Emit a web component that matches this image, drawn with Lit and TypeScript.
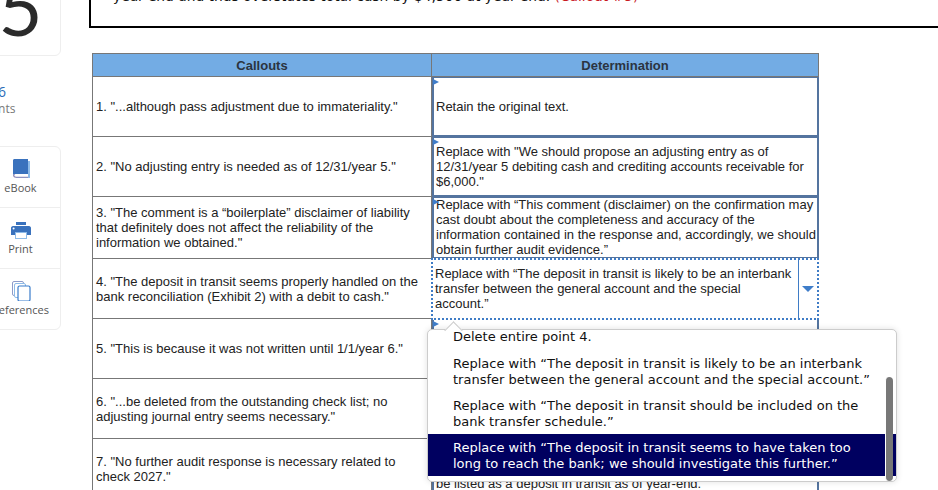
import { LitElement, html, css } from "lit";
import { customElement } from "lit/decorators.js";

const LEFT = [
  `1. "...although pass adjustment due to immateriality."`,
  `2. "No adjusting entry is needed as of 12/31/year 5."`,
  `3. "The comment is a “boilerplate” disclaimer of liability that definitely does not affect the reliability of the information we obtained."`,
  `4. "The deposit in transit seems properly handled on the bank reconciliation (Exhibit 2) with a debit to cash."`,
  `5. "This is because it was not written until 1/1/year 6."`,
  `6. "...be deleted from the outstanding check list; no adjusting journal entry seems necessary."`,
  `7. "No further audit response is necessary related to check 2027."`,
];

const RIGHT = [
  `Retain the original text.`,
  `Replace with "We should propose an adjusting entry as of 12/31/year 5 debiting cash and crediting accounts receivable for $6,000."`,
  `Replace with “This comment (disclaimer) on the confirmation may cast doubt about the completeness and accuracy of the information contained in the response and, accordingly, we should obtain further audit evidence.”`,
  `Replace with “The deposit in transit is likely to be an interbank transfer between the general account and the special account.”`,
  ``,
  ``,
  `be listed as a deposit in transit as of year-end.`,
];

const OPTIONS = [
  `Delete entire point 4.`,
  `Replace with “The deposit in transit is likely to be an interbank transfer between the general account and the special account.”`,
  `Replace with “The deposit in transit should be included on the bank transfer schedule.”`,
  `Replace with “The deposit in transit seems to have taken too long to reach the bank; we should investigate this further.”`,
];

@customElement("app-root")
export class AppRoot extends LitElement {
  static styles = css`
    :host { display: block; width: 938px; height: 490px; overflow: hidden; background: #fff; font-family: "Liberation Sans", Arial, sans-serif; }
    .page { display: flex; height: 490px; overflow: hidden; }

    .side { flex: none; width: 81px; margin-left: -20px; margin-right: 28px; display: flex; flex-direction: column; font-family: "Open Sans", sans-serif; }
    .score { flex: none; height: 100px; margin-top: -44px; box-sizing: border-box; border: 1px solid #eee; border-radius: 6px; display: flex; justify-content: center; align-items: flex-end; }
    .score span { font-family: Lato, sans-serif; font-size: 76px; line-height: 76px; color: #2b2b2b; margin-bottom: 10px; }
    .pts { margin-top: 27px; margin-right: 45px; text-align: center; white-space: nowrap; display: flex; flex-direction: column; align-items: center; }
    .pts b { display: block; font-weight: 400; font-size: 14px; line-height: 18px; color: #2a6cb8; }
    .pts i { display: block; font-style: normal; font-size: 12px; line-height: 16px; color: #777; }
    .tools { margin-top: 29px; border: 1px solid #eee; border-radius: 6px; }
    .tool { height: 60px; display: flex; flex-direction: column; align-items: center; padding-top: 11px; box-sizing: border-box; font-size: 11px; line-height: 14px; color: #555; gap: 2px; }
    .tool + .tool { border-top: 1px solid #eee; height: 61px; }
    .tool svg { display: block; flex: none; }

    .main { flex: 1; min-width: 0; }
    .box { height: 58px; margin-top: -30px; margin-right: -20px; box-sizing: border-box; border: 2px solid #000; padding: 16px 0 0 22px; font-family: "DejaVu Sans", sans-serif; font-size: 13.8px; line-height: 16px; color: #111; white-space: nowrap; }
    .box em { font-style: normal; color: #c8191f; }

    .table { margin: 25px 0 0 3px; width: 727px; display: grid; grid-template-columns: 340px 387px; grid-template-rows: 24px 60px 60px 62px 60px 60px 60px 60px; box-sizing: border-box; font-size: 13px; line-height: 15px; color: #222; }
    .th { background: #73ace4; border: 1px solid #777; font-weight: 700; color: #2b3440; text-align: center; display: flex; align-items: center; justify-content: center; box-sizing: border-box; padding-top: 1px; }
    .th.r { border-left: 0; }
    .l { border: 1px solid #777; border-top: 0; box-sizing: border-box; display: flex; align-items: center; padding: 0.5px 8px 0 3px; }
    .r-cell { position: relative; border: 2px solid #54749f; border-top-width: 1px; box-sizing: border-box; display: flex; align-items: center; padding: 0 0 0 2px; background: #fff; }
    .r-cell.tall { padding-bottom: 1px; }
    .r-cell::before { content: ""; position: absolute; left: -1px; top: 1px; border-left: 6px solid #3f7dc9; border-top: 3.5px solid transparent; border-bottom: 3.5px solid transparent; }
    .r-cell.focus { border: 2px dotted #3f7cc6; margin: -1px 0 -1px -1px; padding: 0; align-items: stretch; z-index: 1; }
    .r-cell.focus::before { display: none; }
    .ftext { flex: 1; display: flex; align-items: center; padding: 0 3px 1px 2px; border-right: 1px solid #3f7cc6; }
    .arrow { flex: none; width: 18px; display: flex; align-items: center; justify-content: center; }
    .arrow::after { content: ""; border-top: 6px solid #3f7dc9; border-left: 6px solid transparent; border-right: 6px solid transparent; }

    .menu { position: absolute; left: -6px; top: 69px; width: 470px; height: 153px; box-sizing: border-box; background: #fff; border: 1px solid #ccc; border-radius: 5px; box-shadow: 0 0 6px rgba(0,0,0,.12); font-family: "DejaVu Sans", sans-serif; font-size: 13px; line-height: 16px; color: #111; z-index: 3; }
    .caret { position: absolute; left: 19px; top: -6px; width: 12px; height: 12px; background: #fff; border: 1px solid #ccc; border-right: 0; border-bottom: 0; transform: rotate(45deg); }
    .list { position: absolute; inset: 0; overflow: hidden; border-radius: 4px; }
    .opt { padding: 6px 18px 4px 25px; }
    .opt:first-child { margin-top: -7px; padding-bottom: 5px; padding-top: 6px; }
    .opt.sel { background: #000060; color: #fff; }
    .thumb { position: absolute; right: 3px; top: 47px; bottom: 0; width: 7px; background: #777; border-left: 1px solid #fff; border-radius: 4px; }
  `;

  render() {
    return html`
      <div class="page">
        <aside class="side">
          <div class="score"><span>5</span></div>
          <div class="pts"><b>16</b><i>points</i></div>
          <div class="tools">
            <div class="tool">
              <svg width="20" height="21" viewBox="0 0 20 21">
                <path d="M17 3h2v17H5v-1h12z" fill="#8ebbe8"/>
                <path d="M2 2.5C2 1.6 2.6 1 3.5 1H17v15H4c-1 0-2 .6-2 1.5z" fill="#3a72bd"/>
                <path d="M2 17c0 1.6 1 2.7 2.6 2.7H17v-1H5c-1 0-1.6-.5-1.6-1.2 0-.8.6-1.5 1.6-1.5H4c-1 0-2 .5-2 1.5z" fill="#8d86b5"/>
              </svg>
              <span>eBook</span>
            </div>
            <div class="tool">
              <svg width="22" height="21" viewBox="0 0 22 21">
                <rect x="6" y="3" width="10" height="3" fill="#3a72bd"/>
                <path d="M1 9c0-1 .8-2 2-2h16c1.2 0 2 1 2 2v7h-4v-3H5v3H1z" fill="#3a72bd"/>
                <circle cx="3.6" cy="9.5" r="1" fill="#fff"/>
                <rect x="5.5" y="13.5" width="11" height="6" fill="#fff" stroke="#8ebbe8"/>
              </svg>
              <span>Print</span>
            </div>
            <div class="tool">
              <svg width="20" height="21" viewBox="0 0 20 21" fill="#fff">
                <rect x="1.5" y="1.5" width="11" height="14" rx="1.5" stroke="#8d9bc9"/>
                <rect x="3.5" y="3.5" width="11" height="14" rx="1.5" stroke="#8ebbe8"/>
                <rect x="7" y="6" width="12" height="15" rx="1.5" stroke="#3a7ccb" stroke-width="1.2"/>
              </svg>
              <span>References</span>
            </div>
          </div>
        </aside>
        <main class="main">
          <div class="box">year-end and thus overstates total cash by $4,500 at year-end. <em>(Callout #5)</em></div>
          <div class="table">
            <div class="th">Callouts</div>
            <div class="th r">Determination</div>
            ${LEFT.map((t, i) => html`
              <div class="l"><span>${t}</span></div>
              ${i === 3
                ? html`<div class="r-cell focus">
                    <div class="ftext"><span>${RIGHT[i]}</span></div>
                    <div class="arrow"></div>
                    <div class="menu">
                      <div class="caret"></div>
                      <div class="list">
                        ${OPTIONS.map((o, k) => html`<div class="opt ${k === 3 ? "sel" : ""}">${o}</div>`)}
                      </div>
                      <div class="thumb"></div>
                    </div>
                  </div>`
                : html`<div class="r-cell ${i === 2 ? "tall" : ""}"><span>${i === 6 ? html`&nbsp;<br />&nbsp;<br />` : ""}${RIGHT[i]}</span></div>`}
            `)}
          </div>
        </main>
      </div>
    `;
  }
}
